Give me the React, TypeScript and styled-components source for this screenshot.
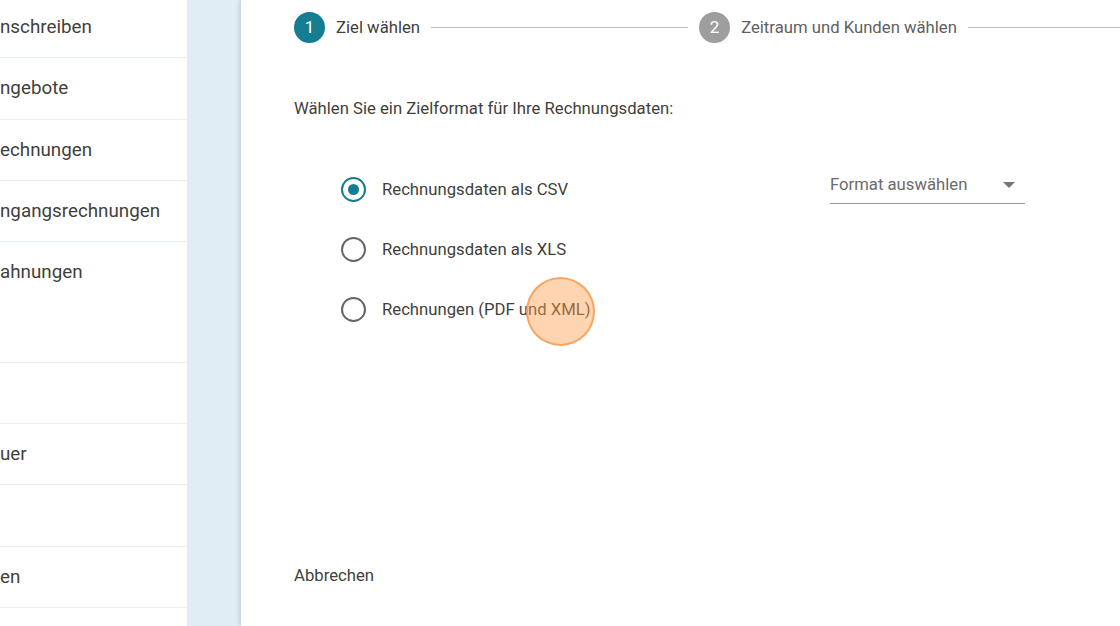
import React from 'react';
import styled, { createGlobalStyle } from 'styled-components';

const Global = createGlobalStyle`
  html, body { margin: 0; padding: 0; }
  body {
    width: 1120px;
    height: 626px;
    overflow: hidden;
    background: #fff;
    font-family: Roboto, "Noto Sans", sans-serif;
    color: #434343;
  }
`;

const Page = styled.div`
  display: flex;
  width: 1120px;
  height: 626px;
  overflow: hidden;
`;

const Sidebar = styled.nav`
  width: 187px;
  flex: 0 0 187px;
  background: #fff;
  margin-top: -3px;
  overflow: hidden;
`;

const NavItem = styled.div<{ $tall?: boolean }>`
  height: ${({ $tall }) => ($tall ? 120.6 : 61.3)}px;
  border-bottom: 1px solid #e6eff3;
  padding-top: ${({ $tall }) => ($tall ? 19 : 0)}px;
  display: flex;
  align-items: ${({ $tall }) => ($tall ? 'flex-start' : 'center')};
  font-size: 18.8px;
  color: #3f3f3c;
  white-space: nowrap;
  box-sizing: border-box;
`;

const Gutter = styled.div`
  width: 54px;
  flex: 0 0 54px;
  background: #dfeef5;
`;

const Main = styled.main`
  position: relative;
  flex: 1;
  min-width: 0;
  background: #fff;
  box-shadow: -2px 0 4px rgba(0, 0, 0, 0.12);
  padding: 0 0 0 53px;
  display: flex;
  flex-direction: column;
`;

const Stepper = styled.div`
  display: flex;
  align-items: center;
  height: 54px;
  margin-right: -116px;
`;

const Step = styled.div`
  display: flex;
  align-items: center;
  gap: 11px;
  flex: 0 0 auto;
`;

const StepCircle = styled.span<{ $active: boolean }>`
  width: 31px;
  height: 31px;
  border-radius: 50%;
  background: ${({ $active }) => ($active ? '#157d91' : '#9e9e9e')};
  color: #fff;
  font-size: 17px;
  display: inline-flex;
  align-items: center;
  justify-content: center;
`;

const StepLabel = styled.span<{ $active: boolean }>`
  font-size: 16.7px;
  color: ${({ $active }) => ($active ? '#3f3f3c' : '#5f5f5f')};
`;

const StepLine = styled.span`
  flex: 1;
  height: 1px;
  background: #bdbdbd;
  margin: 0 11px;
`;

const Prompt = styled.p`
  margin: 45px 0 0;
  font-size: 16.7px;
  color: #3f3f3c;
`;

const OptionsRow = styled.div`
  display: flex;
  justify-content: space-between;
  margin-top: 59px;
  padding-left: 47px;
  width: 684px;
`;

const RadioGroup = styled.div`
  display: flex;
  flex-direction: column;
  gap: 35px;
`;

const RadioOption = styled.label`
  display: flex;
  align-items: center;
  gap: 16px;
  height: 25px;
  font-size: 16.7px;
  color: #3f3f3c;
  cursor: pointer;
`;

const RadioRing = styled.span<{ $checked: boolean }>`
  width: 25px;
  height: 25px;
  box-sizing: border-box;
  border-radius: 50%;
  border: 2.5px solid ${({ $checked }) => ($checked ? '#157d91' : '#666')};
  display: inline-flex;
  align-items: center;
  justify-content: center;

  &::after {
    content: '';
    width: 11px;
    height: 11px;
    border-radius: 50%;
    background: ${({ $checked }) => ($checked ? '#157d91' : 'transparent')};
  }
`;

const Select = styled.div`
  width: 195px;
  height: 36px;
  margin-top: -9px;
  border-bottom: 1.5px solid #9a9a9a;
  display: flex;
  align-items: center;
  justify-content: space-between;
  font-size: 16.7px;
  color: #6b6b6b;
  box-sizing: border-box;
  padding-bottom: 2px;
`;

const Caret = styled.span`
  width: 0;
  height: 0;
  border-left: 6px solid transparent;
  border-right: 6px solid transparent;
  border-top: 6px solid #757575;
  margin-right: 10px;
`;

const Footer = styled.div`
  margin-top: auto;
  padding-bottom: 41px;
  font-size: 16.7px;
  color: #3f3f3c;
`;

const ClickMark = styled.span`
  position: absolute;
  left: 285px;
  top: 277px;
  width: 69px;
  height: 69px;
  box-sizing: border-box;
  border-radius: 50%;
  background: rgba(255, 160, 80, 0.45);
  border: 2.5px solid rgba(245, 160, 90, 0.9);
  pointer-events: none;
`;

const navItems = [
  { label: 'nschreiben' },
  { label: 'ngebote' },
  { label: 'echnungen' },
  { label: 'ngangsrechnungen' },
  { label: 'ahnungen', tall: true },
  { label: '' },
  { label: 'uer' },
  { label: '' },
  { label: 'en' },
  { label: '' },
];

const options = [
  { label: 'Rechnungsdaten als CSV', checked: true },
  { label: 'Rechnungsdaten als XLS', checked: false },
  { label: 'Rechnungen (PDF und XML)', checked: false },
];

export default function App() {
  return (
    <>
      <Global />
      <Page>
        <Sidebar>
          {navItems.map((item, i) => (
            <NavItem key={i} $tall={item.tall}>{item.label}</NavItem>
          ))}
        </Sidebar>
        <Gutter />
        <Main>
          <Stepper>
            <Step>
              <StepCircle $active>1</StepCircle>
              <StepLabel $active>Ziel wählen</StepLabel>
            </Step>
            <StepLine />
            <Step>
              <StepCircle $active={false}>2</StepCircle>
              <StepLabel $active={false}>Zeitraum und Kunden wählen</StepLabel>
            </Step>
            <StepLine />
          </Stepper>
          <Prompt>Wählen Sie ein Zielformat für Ihre Rechnungsdaten:</Prompt>
          <OptionsRow>
            <RadioGroup>
              {options.map(o => (
                <RadioOption key={o.label}>
                  <RadioRing $checked={o.checked} />
                  {o.label}
                </RadioOption>
              ))}
            </RadioGroup>
            <Select>
              Format auswählen
              <Caret />
            </Select>
          </OptionsRow>
          <Footer>Abbrechen</Footer>
          <ClickMark />
        </Main>
      </Page>
    </>
  );
}
